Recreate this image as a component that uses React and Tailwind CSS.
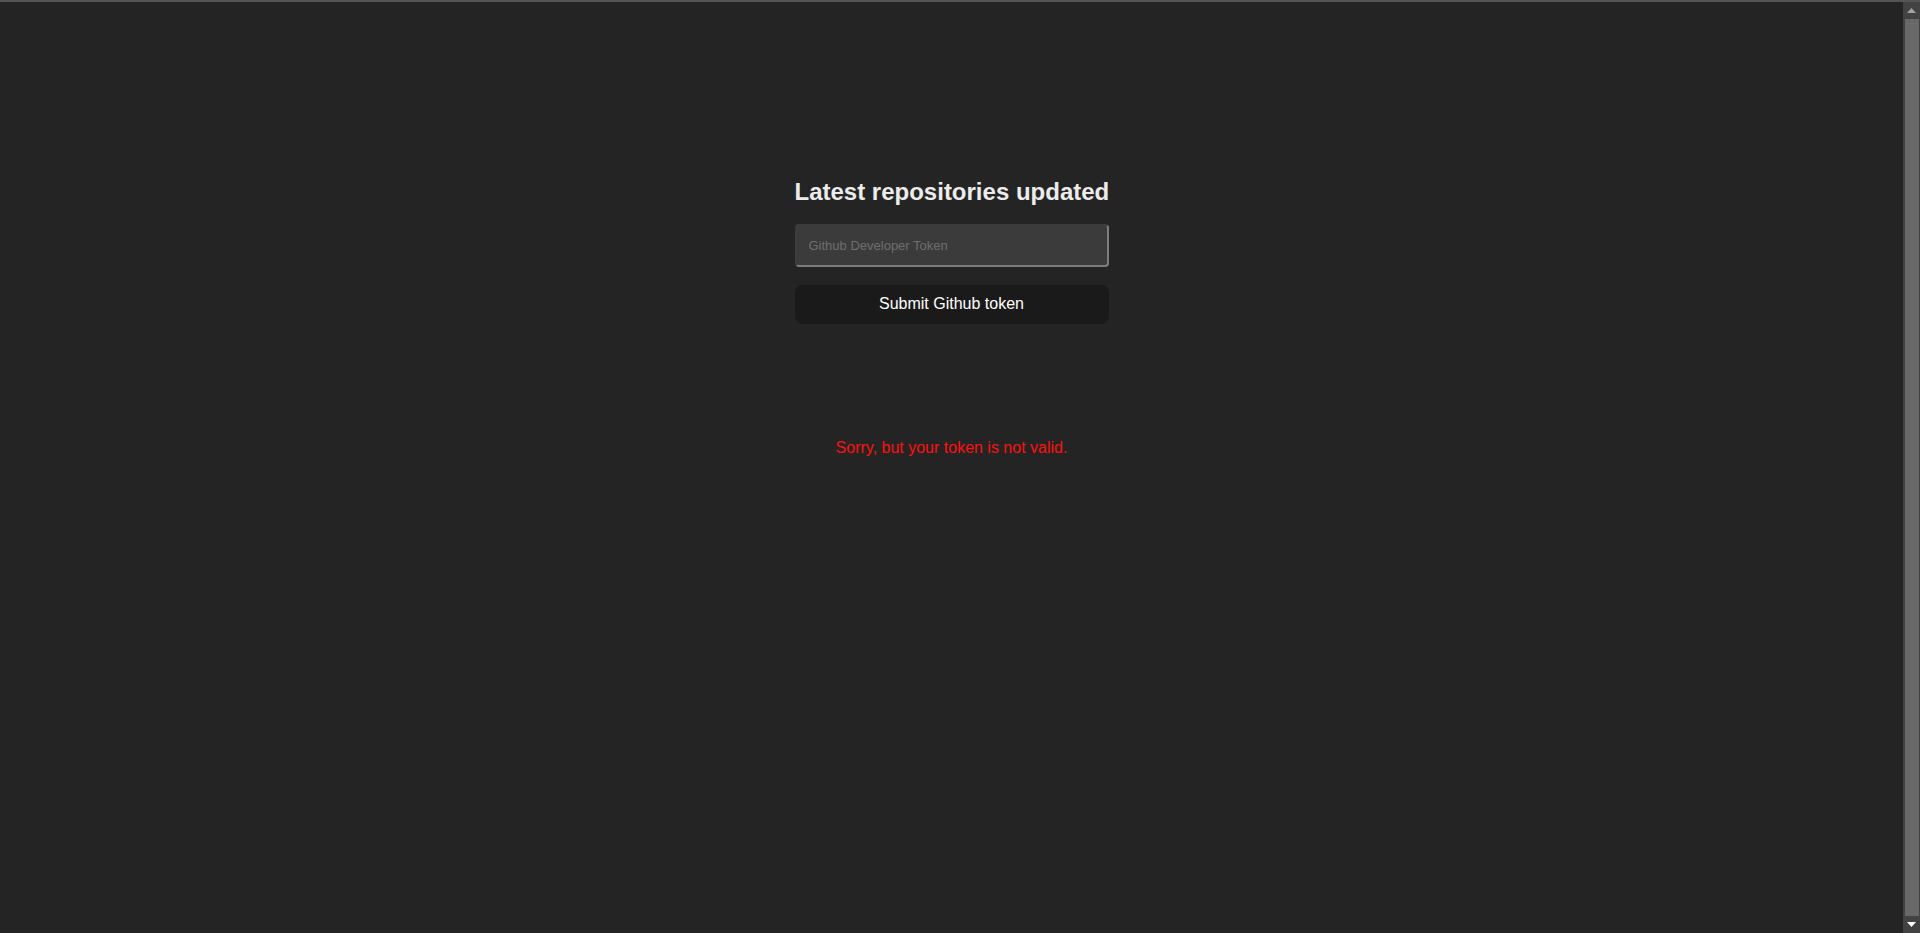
import React from "react";

export default function App() {
  return (
    <div
      className="flex h-[933px] w-full flex-col overflow-hidden bg-[#242424]"
      style={{ fontFamily: '"Liberation Sans", Arial, sans-serif' }}
    >
      <div className="h-[2px] w-full shrink-0 bg-[#555555]" />
      <div className="flex min-h-0 flex-1">
        <main className="flex flex-1 flex-col items-center pt-[176px]">
          <div className="flex w-[314px] flex-col">
            <h2 className="whitespace-nowrap text-[24px] font-bold leading-[1.15] text-[#ececec]">
              Latest repositories updated
            </h2>
            <input
              type="text"
              placeholder="Github Developer Token"
              className="mt-[18px] h-[43px] w-full rounded-[4px] border-2 border-t-[#3c3c3c] border-l-[#3c3c3c] border-b-[#7d7d7d] border-r-[#7d7d7d] bg-[#3b3b3b] px-[12px] text-[13px] text-white outline-none placeholder:text-[#6f6f6f]"
            />
            <button className="mt-[18px] h-[39px] w-full rounded-[8px] bg-[#1a1a1a] text-[16px] text-white">
              Submit Github token
            </button>
            <p className="mt-[115px] text-center text-[16px] leading-[1.15] text-[#ff1010]">
              Sorry, but your token is not valid.
            </p>
          </div>
        </main>
        <div className="flex w-[17px] shrink-0 flex-col items-center bg-[#424242]">
          <div className="flex h-[17px] w-full items-center justify-center">
            <svg width="9" height="5" viewBox="0 0 9 5">
              <path d="M0 5 L4.5 0 L9 5 Z" fill="#a3a3a3" />
            </svg>
          </div>
          <div className="w-[14px] flex-1 bg-[#686868]" />
          <div className="flex h-[17px] w-full items-center justify-center">
            <svg width="9" height="5" viewBox="0 0 9 5">
              <path d="M0 0 L9 0 L4.5 5 Z" fill="#ffffff" />
            </svg>
          </div>
        </div>
      </div>
    </div>
  );
}
